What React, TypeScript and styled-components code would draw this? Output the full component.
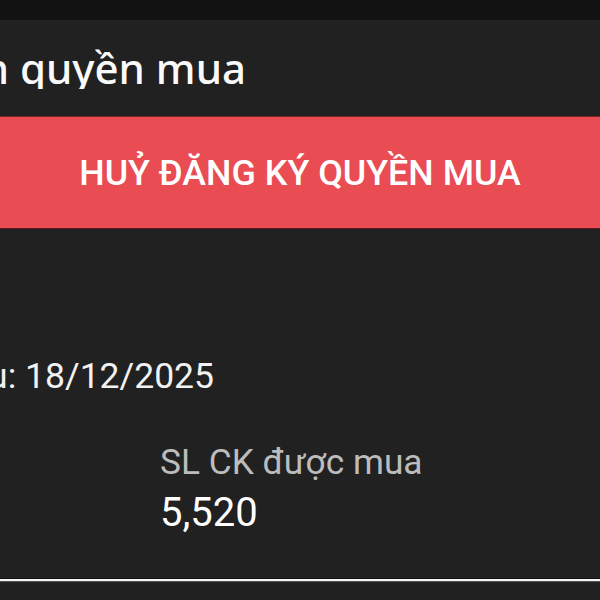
import styled, { createGlobalStyle } from 'styled-components';

const GlobalStyle = createGlobalStyle`
  html, body {
    margin: 0;
    padding: 0;
    background: #212121;
  }
  body {
    font-family: Roboto, 'Liberation Sans', sans-serif;
    color: #fff;
  }
`;

const Screen = styled.div`
  width: 600px;
  height: 600px;
  overflow: hidden;
  display: flex;
  flex-direction: column;
  background: #212121;
`;

const StatusBar = styled.div`
  height: 20px;
  flex-shrink: 0;
  background: #121212;
`;

const Header = styled.div`
  height: 96px;
  flex-shrink: 0;
  display: flex;
  align-items: center;
`;

// clips the start of a long line so only its tail shows at the left edge
const ClipLine = styled.div<{ $width: number }>`
  width: ${(p) => p.$width}px;
  display: flex;
  justify-content: flex-end;
  overflow: hidden;
  white-space: nowrap;
`;

const Title = styled.span`
  font-family: 'Noto Sans', sans-serif;
  font-size: 42px;
  font-weight: 500;
  color: #fafafa;
  line-height: 1;
`;

const CancelButton = styled.button`
  height: 113px;
  flex-shrink: 0;
  width: 100%;
  border: none;
  border-top: 1px solid #7a2226;
  border-bottom: 1px solid #5a1a1d;
  background: #e94c53;
  color: #fff;
  font-family: Roboto, sans-serif;
  font-size: 35.8px;
  font-weight: 500;
  display: flex;
  align-items: center;
  justify-content: center;
  padding: 0;
`;

const Body = styled.div`
  display: flex;
  flex-direction: column;
  padding-top: 130px;
`;

const DateText = styled.span`
  font-size: 35.5px;
  color: #f2f2f2;
  line-height: 1;
`;

const InfoRow = styled.div`
  display: grid;
  grid-template-columns: 160px 1fr;
  margin-top: 46px;
`;

const InfoCell = styled.div`
  display: flex;
  flex-direction: column;
  gap: 10px;
`;

const Label = styled.span`
  font-size: 35.3px;
  color: #bcbcbc;
  line-height: 1.2;
`;

const Value = styled.span`
  font-size: 40px;
  color: #fff;
  line-height: 1;
`;

const Divider = styled.div`
  margin-top: 45px;
  height: 2px;
  background: #f5f5f5;
  border-top: 1px solid #111;
  border-bottom: 1px solid #555;
`;

export default function App() {
  return (
    <>
      <GlobalStyle />
      <Screen>
        <StatusBar />
        <Header>
          <ClipLine $width={246}>
            <Title>Thông tin quyền mua</Title>
          </ClipLine>
        </Header>
        <CancelButton>HUỶ ĐĂNG KÝ QUYỀN MUA</CancelButton>
        <Body>
          <ClipLine $width={214}>
            <DateText>Ngày bắt đầu: 18/12/2025</DateText>
          </ClipLine>
          <InfoRow>
            <div />
            <InfoCell>
              <Label>SL CK được mua</Label>
              <Value>5,520</Value>
            </InfoCell>
          </InfoRow>
          <Divider />
        </Body>
      </Screen>
    </>
  );
}
